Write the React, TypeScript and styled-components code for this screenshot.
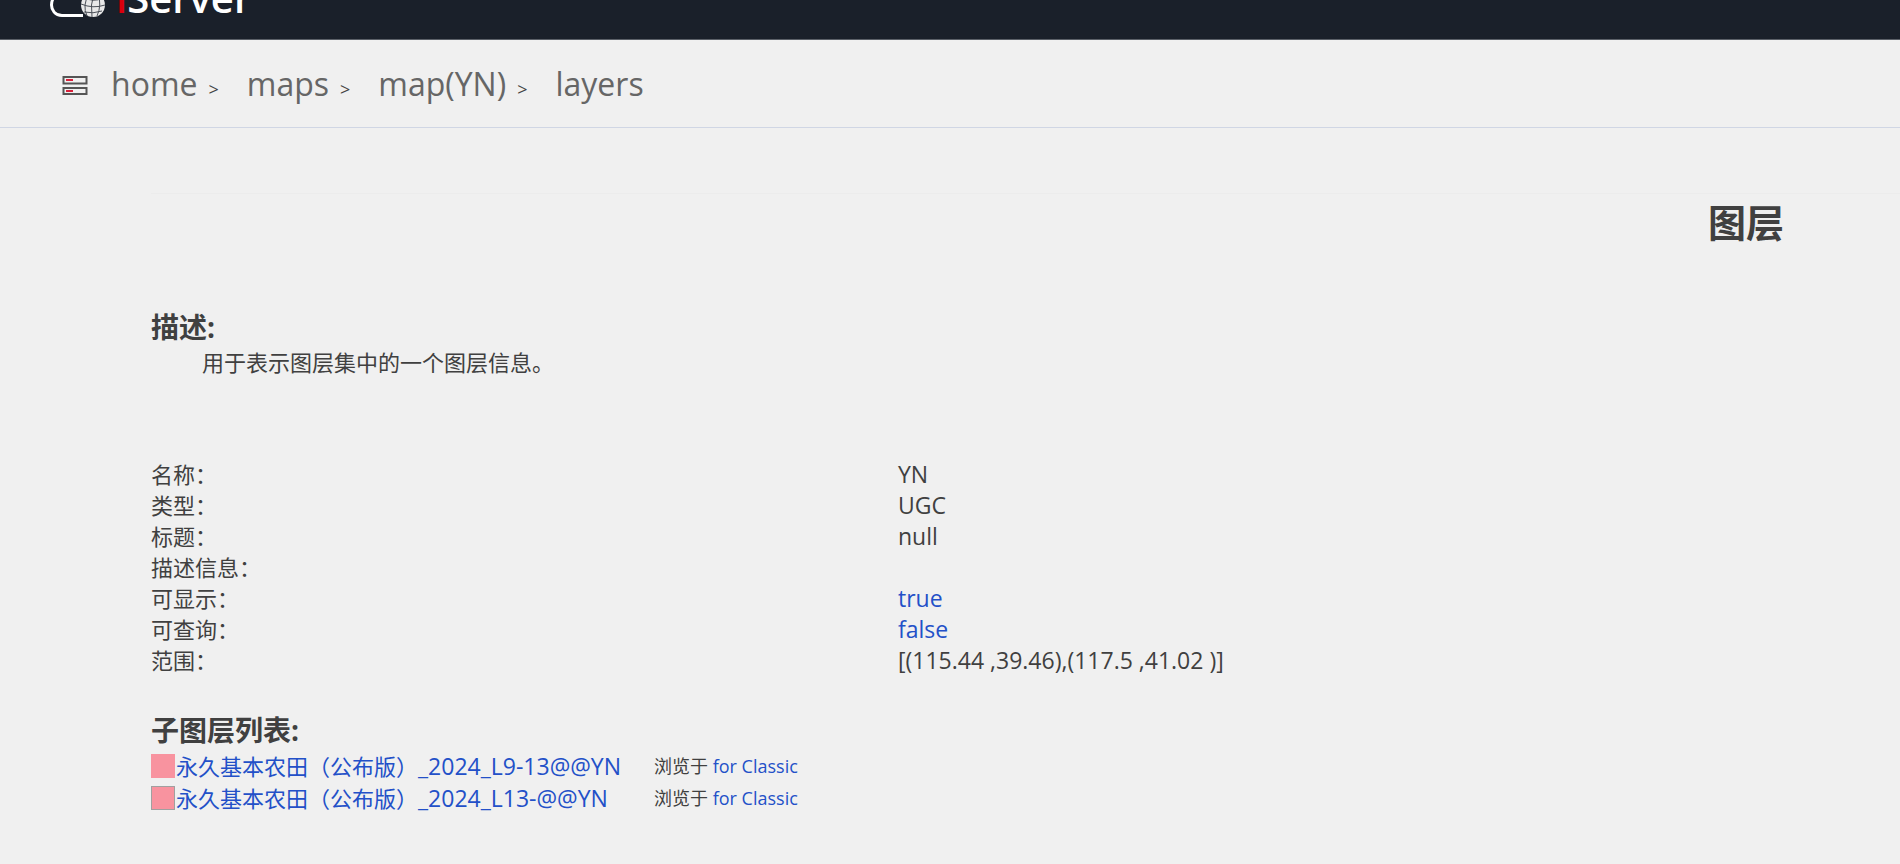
import React from "react";
import styled, { createGlobalStyle } from "styled-components";

const Global = createGlobalStyle`
  body {
    margin: 0;
    background: #f0f0f0;
    color: #404040;
    font: 22px/31px "Open Sans", "Noto Sans CJK SC", sans-serif;
  }
`;

const Header = styled.header`
  display: flex;
  align-items: flex-end;
  height: 39px;
  padding-left: 48px;
  overflow: hidden;
  background: #1a202a;
  border-bottom: 1px solid #5b6068;
`;

const Brand = styled.a`
  display: flex;
  align-items: flex-end;
  gap: 10px;
  padding-bottom: 21px;
  color: #ffffff;
  text-decoration: none;
`;

const CloudLogo = styled.svg`
  width: 58px;
  height: 36px;
`;

const BrandName = styled.span`
  font-size: 40px;
  line-height: 40px;
  font-weight: 600;
`;

const BrandAccent = styled.span`
  color: #d9000d;
`;

const Breadcrumb = styled.nav`
  display: flex;
  align-items: center;
  height: 85px;
  padding: 2px 0 0 62px;
  border-bottom: 1px solid #d0d6e4;
`;

const ServerIcon = styled.svg`
  width: 26px;
  height: 20px;
  margin-right: 23px;
`;

const Crumbs = styled.ol`
  display: flex;
  align-items: baseline;
  gap: 28px;
  margin: 0;
  padding: 0;
  list-style: none;
`;

const Crumb = styled.li`
  display: flex;
  align-items: baseline;
  gap: 11px;
`;

const CrumbLink = styled.a`
  color: #666666;
  font-size: 32px;
  line-height: 40px;
  text-decoration: none;
`;

const Separator = styled.span`
  color: #444444;
  font-size: 18px;
`;

const Content = styled.main`
  margin-top: 65px;
  padding-left: 151px;
`;

const Title = styled.h1`
  margin: 0;
  padding: 4px 116px 0 0;
  border-top: 1px solid #ececec;
  font-size: 38px;
  line-height: 48px;
  text-align: right;
`;

const Section = styled.section<{ $gap: number }>`
  margin-top: ${(p) => p.$gap}px;
`;

const Heading = styled.h2`
  margin: 0;
  font-size: 28px;
  line-height: 40px;
`;

const Description = styled.p`
  margin: 0;
  padding-left: 51px;
`;

const Properties = styled.table`
  width: 100%;
  border-collapse: collapse;
  table-layout: fixed;
`;

const Label = styled.th`
  width: 747px;
  padding: 0;
  font-weight: 400;
  text-align: left;
`;

const Value = styled.td`
  height: 31px;
  padding: 0;
  font-size: 23px;
`;

const Link = styled.a`
  color: #2350c8;
  text-decoration: none;
`;

const LayerList = styled.ul`
  margin: 0;
  padding: 0;
  list-style: none;
`;

const Layer = styled.li`
  display: grid;
  grid-template-columns: 25px minmax(478px, max-content) max-content;
  align-items: center;
  min-height: 32px;
`;

const LayerSource = styled.span`
  font-size: 23px;
`;

const Swatch = styled.span<{ $outlined: boolean }>`
  box-sizing: border-box;
  width: 24px;
  height: 24px;
  background: #f8939f;
  border: 1px solid ${(p) => (p.$outlined ? "#a0a0a0" : "#f8939f")};
`;

const Browse = styled.span`
  font-size: 18px;
`;

const crumbs = ["home", "maps", "map(YN)", "layers"];

const properties: { label: string; value: string; link?: boolean }[] = [
  { label: "名称", value: "YN" },
  { label: "类型", value: "UGC" },
  { label: "标题", value: "null" },
  { label: "描述信息", value: "" },
  { label: "可显示", value: "true", link: true },
  { label: "可查询", value: "false", link: true },
  { label: "范围", value: "[(115.44 ,39.46),(117.5 ,41.02 )]" },
];

const layers = [
  { name: "永久基本农田（公布版）", source: "_2024_L9-13@@YN", outlined: false },
  { name: "永久基本农田（公布版）", source: "_2024_L13-@@YN", outlined: true },
];

export default function App() {
  return (
    <>
      <Global />
      <Header>
        <Brand href="#">
          <CloudLogo viewBox="0 0 58 36" fill="none" stroke="#fff" aria-hidden="true">
            <path d="M35 33.5H14C7 33.5 3.5 28 3.5 23C3.5 17 7 13 13 13C15 3 32 0 37 12" strokeWidth="3" />
            <circle cx="45" cy="23" r="12" fill="#e8e8e8" stroke="none" />
            <path d="M46 11Q42 23 44 35M33 22Q45 27 57 23M35 15Q45 21 55 16M36 30Q45 32 54 29M41 12Q34 23 39 34M50 12Q54 23 49 34" stroke="#4b5058" />
          </CloudLogo>
          <BrandName>
            <BrandAccent>i</BrandAccent>Server
          </BrandName>
        </Brand>
      </Header>
      <Breadcrumb aria-label="Breadcrumb">
        <ServerIcon viewBox="0 0 26 20" fill="none" aria-hidden="true">
          <path d="M1.5 2H24.5V8.5H1.5ZM1.5 13H24.5V19H1.5Z" stroke="#555" strokeWidth="2" />
          <path d="M4 5H11M4 16H11" stroke="#d8203a" strokeWidth="2" />
        </ServerIcon>
        <Crumbs>
          {crumbs.map((name, i) => (
            <Crumb key={name}>
              <CrumbLink href="#">{name}</CrumbLink>
              {i < crumbs.length - 1 && <Separator>&gt;</Separator>}
            </Crumb>
          ))}
        </Crumbs>
      </Breadcrumb>
      <Content>
        <Title>图层</Title>
        <Section $gap={61}>
          <Heading>描述:</Heading>
          <Description>用于表示图层集中的一个图层信息。</Description>
        </Section>
        <Section $gap={81}>
          <Properties>
            <tbody>
              {properties.map(({ label, value, link }) => (
                <tr key={label}>
                  <Label scope="row">{label}：</Label>
                  <Value>{link ? <Link href="#">{value}</Link> : value}</Value>
                </tr>
              ))}
            </tbody>
          </Properties>
        </Section>
        <Section $gap={34}>
          <Heading>子图层列表:</Heading>
          <LayerList>
            {layers.map(({ name, source, outlined }) => (
              <Layer key={source}>
                <Swatch $outlined={outlined} />
                <Link href="#">
                  {name}
                  <LayerSource>{source}</LayerSource>
                </Link>
                <Browse>
                  浏览于 <Link href="#">for Classic</Link>
                </Browse>
              </Layer>
            ))}
          </LayerList>
        </Section>
      </Content>
    </>
  );
}
